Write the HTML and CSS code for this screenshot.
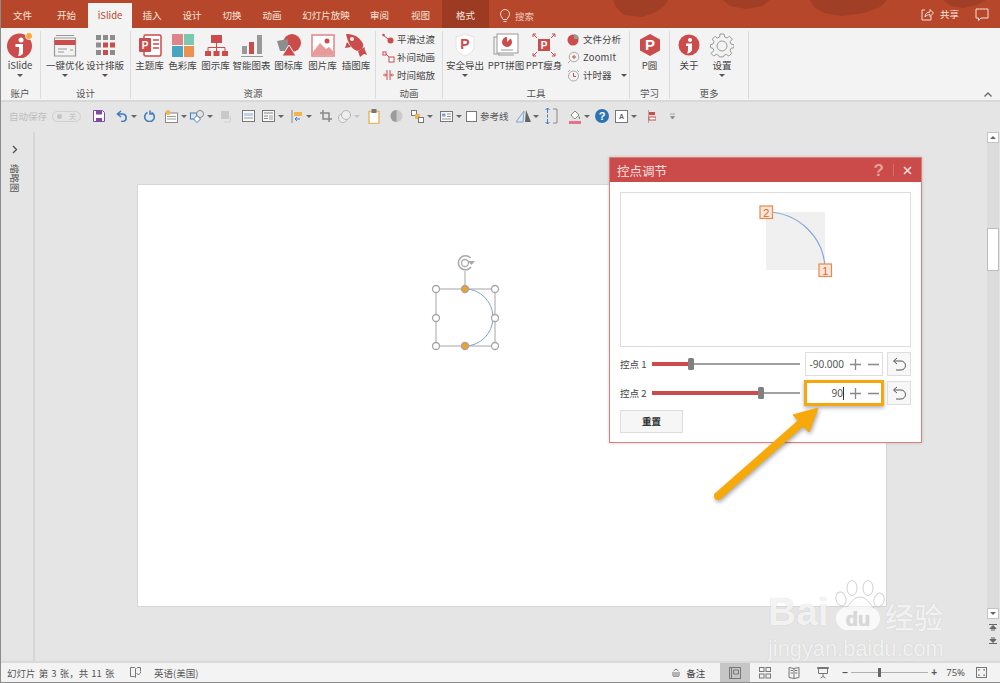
FILE: index.html
```html
<!DOCTYPE html>
<html lang="zh-CN">
<head>
<meta charset="utf-8">
<title>iSlide 控点调节</title>
<link rel="stylesheet" href="styles.css">
</head>
<body>
<div class="app">
  <header class="tabs">
    <svg class="blots" viewBox="0 0 1000 28" aria-hidden="true">
      <path d="M613 0h55l-4 6-8 6-14 5-18-2-8-8z"/>
      <path d="M723 0h47l-8 6-16 3-16-3z"/>
      <path d="M810 0h77l-7 7-16 6-22 3-18-3-10-6z"/>
      <path d="M943 0h43l-9 5-14 3-12-2z"/>
    </svg>
    <span class="tab t45">文件</span>
    <span class="tab t43">开始</span>
    <span class="tab t44 active">iSlide</span>
    <span class="tab t40">插入</span>
    <span class="tab t40">设计</span>
    <span class="tab t40">切换</span>
    <span class="tab t40">动画</span>
    <span class="tab t68">幻灯片放映</span>
    <span class="tab t39">审阅</span>
    <span class="tab t43">视图</span>
    <span class="tab t47 format">格式</span>
    <span class="search">
      <svg width="10" height="14" viewBox="0 0 10 14"><path d="M3 10.5C2.500 8.500.5 7.500.5 5a4.500 4.500 0 0 1 9 0c0 2.500-2 3.500-2.500 5.500zM3.500 12.500h3" fill="none" stroke="#f5dcd3" stroke-width="1"/></svg>
      <span>搜索</span>
    </span>
    <span class="tab-right">
      <svg width="13" height="13" viewBox="0 0 13 13"><path d="M4 2H1v10h9V8M4 9c0-3 2-5 5-5V1.500L12.500 5 9 8.500V6.500C7 6.500 5.500 7.500 4 9z" fill="none" stroke="#f6e0d8" stroke-width="1"/></svg>
      <span class="share">共享</span>
      <svg class="comment" width="14" height="13" viewBox="0 0 14 13"><path d="M1 1h12v9H6l-2.500 2.500V10H1z" fill="none" stroke="#f6e0d8" stroke-width="1"/></svg>
    </span>
  </header>

  <nav class="ribbon">
    <section class="group g40">
      <div class="items">
        <div class="btn w40">
          <svg class="ic" width="28" height="26" viewBox="0 0 28 26"><circle cx="13.5" cy="14" r="12.5" fill="#cc4b4b"/><circle cx="15" cy="8" r="2.5" fill="#fff"/><path d="M9.5 12H17v9.500c-1.500 2-3 2.500-5 2.500 1-1.500 1-3 1-9H9.500z" fill="#fff"/><circle cx="23" cy="4" r="3.5" fill="#f4a93a" stroke="#fff" stroke-width=".8"/></svg>
          <span>iSlide</span><i class="caret"></i>
        </div>
      </div>
      <div class="glabel">账户</div>
    </section>
    <section class="group g90">
      <div class="items pl3">
        <div class="btn w42">
          <svg class="ic" width="24" height="24" viewBox="0 0 24 24"><path d="M3 2.5h18M1.500 5h21v18h-21z" fill="none" stroke="#999" stroke-width="1.2"/><path d="M1.500 7h21v5h-21z" fill="#cc4b4b"/><path d="M5 16h9M5 19h6M17 17h3" stroke="#999" stroke-width="1.2"/></svg>
          <span>一键优化</span><i class="caret"></i>
        </div>
        <div class="btn w38">
          <svg class="ic" width="24" height="24" viewBox="0 0 24 24" fill="#8d8d8d"><rect x="3" y="2" width="5" height="5"/><rect x="10" y="2" width="5" height="5"/><rect x="17" y="2" width="5" height="5"/><rect x="3" y="9.500" width="5" height="5"/><rect x="10" y="9.500" width="5" height="5" fill="#cc4b4b"/><rect x="17" y="9.500" width="5" height="5" fill="#cc4b4b"/><rect x="3" y="17" width="5" height="5"/><rect x="10" y="17" width="5" height="5" fill="#cc4b4b"/><rect x="17" y="17" width="5" height="5"/></svg>
          <span>设计排版</span><i class="caret"></i>
        </div>
      </div>
      <div class="glabel">设计</div>
    </section>
    <section class="group g245">
      <div class="items pl2">
        <div class="btn w33">
          <svg class="ic" width="24" height="24" viewBox="0 0 24 24"><rect x="6" y="2" width="17" height="21" rx="1.5" fill="#fff" stroke="#cc4b4b" stroke-width="1.5"/><path d="M15 7h6M15 11h6M15 15h6" stroke="#cc4b4b" stroke-width="1.5"/><rect x="1" y="5" width="12" height="14" rx="1" fill="#cc4b4b"/><text x="7" y="16" class="svgp small">P</text></svg>
          <span>主题库</span>
        </div>
        <div class="btn w33">
          <svg class="ic" width="24" height="24" viewBox="0 0 24 24"><rect x="1" y="1" width="11" height="11" fill="#e0848c"/><rect x="13" y="1" width="10" height="11" fill="#7cc8ae"/><rect x="1" y="13" width="11" height="11" fill="#47a5c2"/><rect x="13" y="13" width="10" height="11" fill="#ec9150"/></svg>
          <span>色彩库</span>
        </div>
        <div class="btn w33">
          <svg class="ic" width="24" height="24" viewBox="0 0 24 24"><rect x="7" y="2" width="11" height="8" fill="#cc4b4b"/><path d="M12.5 10v4M4 18v-3.500h17V18M12.500 14v4" fill="none" stroke="#cc4b4b"/><rect x="1" y="18" width="6" height="5" fill="#cc4b4b"/><rect x="9.500" y="18" width="6" height="5" fill="#cc4b4b"/><rect x="18" y="18" width="6" height="5" fill="#cc4b4b"/></svg>
          <span>图示库</span>
        </div>
        <div class="btn w39">
          <svg class="ic" width="24" height="24" viewBox="0 0 24 24"><rect x="2" y="13" width="5" height="8" fill="#999"/><rect x="9" y="9" width="5" height="12" fill="#cc4b4b"/><rect x="17" y="2" width="5" height="19" fill="#999"/><path d="M1 23.500h22" stroke="#999"/></svg>
          <span>智能图表</span>
        </div>
        <div class="btn w35">
          <svg class="ic" width="26" height="24" viewBox="0 0 26 24"><circle cx="16" cy="10" r="9" fill="#cc4b4b"/><path d="M1 8l11-2v12H4z" fill="#8d8d8d"/><path d="M13 12l7 11H6z" fill="#cc4b4b" stroke="#f3f3f3"/></svg>
          <span>图标库</span>
        </div>
        <div class="btn w33">
          <svg class="ic" width="24" height="24" viewBox="0 0 24 24"><rect x="1" y="2" width="22" height="21" fill="#fff" stroke="#e0848c" stroke-width="1.5"/><circle cx="16" cy="8" r="2.5" fill="#cc4b4b"/><path d="M2 19l7-9 6 6 3-2 4 4v4H2z" fill="#e79a9a"/></svg>
          <span>图片库</span>
        </div>
        <div class="btn w34">
          <svg class="ic" width="24" height="24" viewBox="0 0 24 24"><path d="M2 1c7 0 12 2 16 8 2 3 1 5 0 7l-5 2C8 16 4 11 2 1z" fill="#cc4b4b"/><circle cx="8" cy="6" r="2" fill="#f3f3f3"/><path d="M14 18l2 6 4-3 1-7zM3 9l-2 6 6-1zM18 20l5 2-2-5z" fill="#cc4b4b"/></svg>
          <span>插图库</span>
        </div>
      </div>
      <div class="glabel">资源</div>
    </section>
    <section class="group g67">
      <div class="col pl6">
        <div class="row"><svg width="13" height="12" viewBox="0 0 13 12"><path d="M1 2l5 4" stroke="#cc4b4b"/><circle cx="1.5" cy="2" r="1.3" fill="#cc4b4b"/><circle cx="8.5" cy="7.500" r="3" fill="#cc4b4b"/></svg><span>平滑过渡</span></div>
        <div class="row"><svg width="13" height="12" viewBox="0 0 13 12" fill="#fff" stroke="#cc4b4b"><rect x="1" y="1" width="3" height="3"/><path d="M4 3l3 3"/><rect x="7" y="6" width="5" height="5"/></svg><span>补间动画</span></div>
        <div class="row"><svg width="13" height="12" viewBox="0 0 13 12" fill="none" stroke="#cc4b4b"><path d="M1 6h3M9 6h3M5 1v10M8 1v10M3 4.500L4.500 6 3 7.500M10 4.500L8.500 6 10 7.500"/></svg><span>时间缩放</span></div>
      </div>
      <div class="glabel">动画</div>
    </section>
    <section class="group g188">
      <div class="items">
        <div class="btn w44">
          <svg class="ic" width="22" height="24" viewBox="0 0 22 24"><path d="M11 1l9 3v9c0 5-4 8-9 10-5-2-9-5-9-10V4z" fill="#fff" stroke="#e2e2e2"/><text x="11" y="16" class="svgp red">P</text></svg>
          <span>安全导出</span><i class="caret"></i>
        </div>
        <div class="btn w38">
          <svg class="ic" width="26" height="24" viewBox="0 0 26 24"><rect x="1" y="4" width="5" height="17" fill="none" stroke="#999"/><rect x="4" y="1" width="21" height="19" fill="#fff" stroke="#999"/><circle cx="14" cy="9" r="5" fill="#cc4b4b"/><path d="M14 9V4h5z" fill="#fff"/><path d="M8 17h12M5 22h16" stroke="#999"/></svg>
          <span>PPT拼图</span>
        </div>
        <div class="btn w38">
          <svg class="ic" width="24" height="24" viewBox="0 0 24 24"><rect x="6" y="6" width="12" height="12" fill="#cc4b4b"/><text x="12" y="15.500" class="svgp small">P</text><path d="M1 1l4 4M23 1l-4 4M1 23l4-4M23 23l-4-4M1 4V1h3M20 1h3v3M1 20v3h3M20 23h3v-3" stroke="#cc4b4b" fill="none"/></svg>
          <span>PPT瘦身</span>
        </div>
        <div class="col tools">
          <div class="row"><svg width="13" height="13" viewBox="0 0 13 13"><circle cx="6" cy="7" r="5.500" fill="#cc4b4b"/><path d="M7 1a5.500 5.500 0 0 1 5 5H7z" fill="#999"/></svg><span>文件分析</span></div>
          <div class="row"><svg width="13" height="13" viewBox="0 0 13 13" fill="none" stroke="#aaa"><circle cx="7" cy="6" r="4.800"/><path d="M3.500 9.500L1 12"/><path d="M5 6h4M7 4v4" stroke="#cc4b4b"/></svg><span class="zoomit">ZoomIt</span></div>
          <div class="row"><svg width="13" height="13" viewBox="0 0 13 13" fill="none" stroke="#aaa"><circle cx="6.5" cy="7" r="5"/><path d="M6.500 4v3.500H9" stroke="#cc4b4b"/><path d="M1 3l2-2M12 3l-2-2"/></svg><span>计时器</span><i class="caret inline"></i></div>
        </div>
      </div>
      <div class="glabel">工具</div>
    </section>
    <section class="group g40 wide">
      <div class="items">
        <div class="btn full">
          <svg class="ic" width="24" height="24" viewBox="0 0 24 24"><path d="M12 1l10 5.500v11L12 23 2 17.500v-11z" fill="#cc4b4b"/><text x="12" y="17" class="svgp big">P</text></svg>
          <span>P圆</span>
        </div>
      </div>
      <div class="glabel">学习</div>
    </section>
    <section class="group g79">
      <div class="items">
        <div class="btn w38">
          <svg class="ic" width="24" height="24" viewBox="0 0 24 24"><circle cx="12" cy="12" r="10.500" fill="#cc4b4b"/><circle cx="13" cy="7" r="2" fill="#fff"/><path d="M9 10.500h6v7c-1.500 2-3 3-5 3 1-1.500 1-3 1-7.500H9z" fill="#fff"/></svg>
          <span>关于</span>
        </div>
        <div class="btn w28">
          <svg class="ic" width="24" height="24" viewBox="0 0 24 24" fill="none" stroke="#9a9a9a"><path d="M10 1h4l.6 3 2.400 1 2.600-1.700 2.800 2.800L20 8.700l1 2.400 3 .6v3l-3 .6-1 2.400 1.700 2.600-2.800 2.800-2.600-1.700-2.400 1-.6 1.500h-4l-.6-1.500-2.400-1-2.600 1.700-2.800-2.800L4 17.700l-1-2.400-2.500-.6v-3l2.500-.6 1-2.400-1.700-2.600 2.800-2.800L7.200 5l2.400-1z"/><circle cx="12" cy="13" r="5"/></svg>
          <span>设置</span><i class="caret"></i>
        </div>
      </div>
      <div class="glabel">更多</div>
    </section>
    <svg class="collapse" width="8" height="5" viewBox="0 0 8 5"><path d="M.5 4.500L4 1l3.500 3.500" fill="none" stroke="#666" stroke-width="1.3"/></svg>
  </nav>

  <div class="qat">
    <span class="autosave">自动保存</span>
    <span class="toggle"><i></i><b>关</b></span>
    <svg class="m12" width="12" height="12" viewBox="0 0 12 12"><path d="M.5.500h9l2 2v9H.500z" fill="#fff" stroke="#7d4aa6"/><path d="M3 .5h6v4H3zM3 8h6v3.500H3z" fill="#7d4aa6"/></svg>
    <svg class="m11" width="12" height="12" viewBox="0 0 12 12" fill="none" stroke="#3f7fbf" stroke-width="1.6"><path d="M5 1L1.500 4 5 7M2 4h5a3.800 3.800 0 0 1 0 7.500H5"/></svg>
    <i class="dn"></i>
    <svg class="m6" width="12" height="12" viewBox="0 0 12 12" fill="none" stroke="#3f7fbf" stroke-width="1.6"><path d="M4.500 2.500a4.800 4.800 0 1 0 4 0M7 .5v3.500h3.500"/></svg>
    <svg class="m10" width="13" height="13" viewBox="0 0 13 13"><rect x=".5" y="3" width="12" height="9.500" fill="#fff" stroke="#888"/><path d="M2 6.500h9M2 9h9" stroke="#999"/><circle cx="3" cy="2.500" r="2.500" fill="#f0b64d"/></svg>
    <i class="dn"></i>
    <svg class="m3" width="14" height="13" viewBox="0 0 14 13" fill="none" stroke="#3f7fbf"><rect x=".5" y="3" width="6" height="6"/><circle cx="10" cy="4" r="3.500" stroke="#888"/><path d="M7 5.500l3.500 3.500L7 12.500 3.500 9z" fill="#fff"/></svg>
    <i class="dn"></i>
    <svg class="m7" width="13" height="13" viewBox="0 0 13 13"><rect x="1" y="1" width="8" height="8" fill="#c9c9c9"/><path d="M10.500 6v6H4" fill="none" stroke="#d2d2d2"/></svg>
    <svg class="m9" width="13" height="12" viewBox="0 0 13 12"><rect x=".5" y=".5" width="12" height="11" fill="#f8f8f8" stroke="#777"/><rect x="2" y="3" width="9" height="3" fill="#b8d4ef"/><path d="M2 8h9" stroke="#999"/></svg>
    <svg class="m7" width="13" height="12" viewBox="0 0 13 12"><rect x=".5" y=".5" width="12" height="11" fill="#f8f8f8" stroke="#777"/><path d="M2 3h9M2 6h4M2 8.500h4" stroke="#888"/><rect x="7" y="5" width="4" height="5" fill="#ccc"/></svg>
    <i class="dn"></i>
    <svg class="m7" width="12" height="13" viewBox="0 0 12 13"><path d="M1 0v13" stroke="#888"/><rect x="3" y="2" width="8" height="4" fill="#f0b64d"/><path d="M9 9H4M6 7L4 9l2 2" fill="none" stroke="#3f7fbf"/></svg>
    <i class="dn"></i>
    <svg class="m8" width="12" height="12" viewBox="0 0 12 12" fill="none" stroke="#888" stroke-width="1.5"><path d="M3 0v9h9M0 3h9v9"/></svg>
    <svg class="m6" width="13" height="13" viewBox="0 0 13 13" fill="#eee" stroke="#b5b5b5"><circle cx="5" cy="8" r="4.500"/><circle cx="8" cy="5" r="4.500"/></svg>
    <i class="dn pale"></i>
    <svg class="m8" width="12" height="15" viewBox="0 0 12 15"><rect x="1" y="2.500" width="10" height="12" fill="#fff" stroke="#eab56a" stroke-width="1.5"/><rect x="3.500" y="0" width="5" height="4" fill="#777"/></svg>
    <svg class="m10" width="13" height="14" viewBox="0 0 13 14"><circle cx="6.5" cy="7" r="6" fill="#c9c9c9"/><path d="M6.500 1a6 6 0 0 0 0 12z" fill="#9b9b9b"/></svg>
    <svg class="m8" width="13" height="13" viewBox="0 0 13 13"><rect x=".5" y=".5" width="5" height="5" fill="#fff" stroke="#777"/><rect x="4" y="4" width="5" height="5" fill="#f0b64d"/><rect x="7.500" y="7.500" width="5" height="5" fill="#fff" stroke="#777"/></svg>
    <i class="dn"></i>
    <svg class="m7" width="13" height="11" viewBox="0 0 13 11"><rect x=".5" y=".5" width="12" height="10" fill="#f8f8f8" stroke="#777"/><rect x="2" y="2.500" width="3.500" height="3" fill="#79a6d6"/><path d="M7 3h4M7 5.500h4M2 8h9" stroke="#999"/></svg>
    <i class="dn"></i>
    <span class="check"></span>
    <span class="guide">参考线</span>
    <svg class="m6" width="18" height="13" viewBox="0 0 18 13"><path d="M11 0l5 12h-6z" fill="#666"/><path d="M9 1L1 12h7z" fill="#dfe8f2" stroke="#7da4cb"/></svg>
    <i class="dn m1x"></i>
    <svg class="m6" width="13" height="16" viewBox="0 0 13 16" fill="none" stroke="#3f7fbf"><path d="M2.500 0v5M.5 2l2-2 2 2M2.500 16v-5M.5 14l2 2 2-2M2.500 6.500v3"/><path d="M8 1h4v14H8" stroke="#888"/></svg>
    <svg class="m11" width="12" height="15" viewBox="0 0 12 15"><path d="M2 6l4-4 4 4-3.500 3.500H5z" fill="#fff" stroke="#888"/><path d="M10 7c1.500 1.500 1.500 3 .5 3s-1-1.500-.5-3z" fill="#888"/><rect x="0" y="12" width="12" height="3" fill="#e8718c"/></svg>
    <i class="dn"></i>
    <svg class="m5" width="14" height="14" viewBox="0 0 14 14"><circle cx="7" cy="7" r="7" fill="#2c73b4"/><text x="7" y="11" class="svgq">?</text></svg>
    <span class="abox">A</span>
    <i class="dn"></i>
    <svg class="m11" width="8" height="13" viewBox="0 0 8 13"><path d="M.5 0v13" stroke="#aaa"/><rect x="1" y="2" width="6" height="3" fill="#cc4b4b"/><rect x="1" y="7" width="7" height="3" fill="#fff" stroke="#cc4b4b"/></svg>
    <svg class="m14" width="5" height="7" viewBox="0 0 5 7"><path d="M0 1h5M.5 3.500L2.500 6l2-2.500z" fill="#888" stroke="#888" stroke-width=".7"/></svg>
  </div>

  <main class="work">
    <aside class="thumbs">
      <svg width="6" height="9" viewBox="0 0 6 9"><path d="M1 1l3.500 3.500L1 8" fill="none" stroke="#555" stroke-width="1.4"/></svg>
      <span class="vtext">缩略图</span>
    </aside>
    <div class="canvas">
      <div class="slide"></div>
    </div>
    <div class="vscroll">
      <span class="sbtn"><i class="up"></i></span>
      <span class="before"></span>
      <span class="thumb-v"></span>
      <span class="grow"></span>
      <span class="sbtn"><i class="down"></i></span>
      <span class="pg">
        <svg width="8" height="7" viewBox="0 0 8 7"><path d="M0 .5h8M4 1.500L1 4.500h6zM2 6h4" fill="#666" stroke="#666"/></svg>
        <svg width="8" height="7" viewBox="0 0 8 7"><path d="M0 6.500h8M4 5.500L1 2.500h6zM2 1h4" fill="#666" stroke="#666"/></svg>
      </span>
    </div>
  </main>

  <footer class="status">
    <span class="st-text">幻灯片 第 3 张，共 11 张</span>
    <svg class="st-book" width="11" height="11" viewBox="0 0 11 11" fill="none" stroke="#777"><path d="M.5.500h4l1 1v9l-1-1h-4zM6.500 1.500l1-1h3v4M6.500 6l2 2 2.500-3"/></svg>
    <span class="st-lang">英语(美国)</span>
    <span class="st-right">
      <svg width="8" height="9" viewBox="0 0 8 9" fill="none" stroke="#777"><path d="M1.500 3L4 1l2.500 2M0 5h8M0 7h8M1 8.800h6"/></svg>
      <span class="notes">备注</span>
      <span class="view on"><svg width="12" height="12" viewBox="0 0 12 12" fill="none" stroke="#777"><rect x=".5" y=".5" width="11" height="11"/><path d="M2.500.5v11M4.500 3h5v4h-5z"/></svg></span>
      <span class="view"><svg width="12" height="12" viewBox="0 0 12 12" fill="none" stroke="#777"><rect x=".5" y=".5" width="4.500" height="4"/><rect x="7" y=".5" width="4.500" height="4"/><rect x=".5" y="7" width="4.500" height="4"/><rect x="7" y="7" width="4.500" height="4"/></svg></span>
      <span class="view"><svg width="12" height="12" viewBox="0 0 12 12" fill="none" stroke="#777"><path d="M6 1.500L1 .5v10l5 1 5-1V.5zM6 1.500v10M2.500 3.500H5M2.500 6H5M7 3.500h2.500M7 6h2.500"/></svg></span>
      <span class="view"><svg width="12" height="12" viewBox="0 0 12 12" fill="none" stroke="#777"><path d="M.5.500h11v1H.500zM1.500 1.500v5h9v-5M6 6.500v3M3.500 11L6 9.500 8.500 11"/></svg></span>
      <span class="zoom">
        <b class="zm">−</b>
        <span class="ztrack"><i class="zthumb"></i></span>
        <b class="zp">+</b>
      </span>
      <span class="pct">75%</span>
      <svg class="fit" width="11" height="11" viewBox="0 0 11 11" fill="none" stroke="#777"><rect x=".5" y=".5" width="10" height="10"/><path d="M3 2v1H2M8 2v1h1M3 9V8H2M8 9V8h1" stroke-width="1.2"/></svg>
    </span>
  </footer>

  <svg class="selection" viewBox="0 0 70 100" aria-hidden="true">
    <path d="M35 37V19M6 37h59v57H6z" fill="none" stroke="#a5a5a5"/>
    <path d="M35 37a28 28.500 0 0 1 0 57" fill="none" stroke="#7fa6cc"/>
    <path d="M40.500 6A7 7 0 1 0 41 15" fill="none" stroke="#a9a9a9" stroke-width="1.6"/>
    <circle cx="35" cy="11" r="3.5" fill="none" stroke="#a9a9a9" stroke-width="1.3"/>
    <path d="M37.500 9h7.500l-3.500 4z" fill="#a9a9a9"/>
    <g fill="#fff" stroke="#a5a5a5" stroke-width="1.3">
      <circle cx="6" cy="37" r="3.5"/><circle cx="65" cy="37" r="3.5"/>
      <circle cx="6" cy="66" r="3.5"/><circle cx="65" cy="66" r="3.5"/>
      <circle cx="6" cy="94" r="3.5"/><circle cx="65" cy="94" r="3.5"/>
      <circle cx="35" cy="37" r="3.5" fill="#f1a226"/><circle cx="35" cy="94" r="3.5" fill="#f1a226"/>
    </g>
  </svg>

  <section class="dialog">
    <div class="dlg-head">
      <span class="dlg-title">控点调节</span>
      <span class="dlg-q">?</span>
      <span class="dlg-sep"></span>
      <svg width="9" height="9" viewBox="0 0 9 9"><path d="M1 1l7 7M8 1L1 8" stroke="#f8e0e0" stroke-width="1.6"/></svg>
    </div>
    <div class="dlg-body">
      <div class="preview">
        <svg width="288" height="153" viewBox="0 0 288 153">
          <rect x="145" y="19" width="59" height="58" fill="#f0f0f0"/>
          <path d="M145 19a59 58 0 0 1 59 58" fill="none" stroke="#86a8db" stroke-width="1.2"/>
          <rect x="139" y="13" width="12.5" height="12.5" fill="#fbe5d8" stroke="#e58a50" stroke-width="1.2"/>
          <text x="145.2" y="23.500" class="pt">2</text>
          <rect x="198" y="71" width="12.5" height="12.5" fill="#fbe5d8" stroke="#e58a50" stroke-width="1.2"/>
          <text x="204.2" y="81.500" class="pt">1</text>
        </svg>
      </div>
      <div class="ctl">
        <span class="ctl-label">控点 1</span>
        <div class="slider"><i class="fill" style="width:36px"></i><i class="knob"></i><i class="rest"></i></div>
        <div class="num"><span class="val">-90.000</span><svg class="pm" width="30" height="11" viewBox="0 0 30 11"><path d="M1 5.500h11M6.500 0v11M19 5.500h11" stroke="#888" stroke-width="1.3"/></svg></div>
        <span class="undo"><svg width="14" height="14" viewBox="0 0 14 14" fill="none" stroke="#555"><path d="M5 1L1.500 4 5 7M2 4h7a4 4 0 0 1 0 9H4"/></svg></span>
      </div>
      <div class="ctl">
        <span class="ctl-label">控点 2</span>
        <div class="slider"><i class="fill" style="width:106px"></i><i class="knob"></i><i class="rest"></i></div>
        <div class="num hot"><span class="val">90<u></u></span><svg class="pm" width="30" height="11" viewBox="0 0 30 11"><path d="M1 5.500h11M6.500 0v11M19 5.500h11" stroke="#888" stroke-width="1.3"/></svg></div>
        <span class="undo"><svg width="14" height="14" viewBox="0 0 14 14" fill="none" stroke="#555"><path d="M5 1L1.500 4 5 7M2 4h7a4 4 0 0 1 0 9H4"/></svg></span>
      </div>
      <button class="reset" type="button">重置</button>
    </div>
  </section>

  <svg class="arrow" viewBox="0 0 130 110" aria-hidden="true">
    <path d="M8 95L91 22" stroke="#f6a908" stroke-width="8" stroke-linecap="round"/>
    <path d="M108 7L83 14l16 17z" fill="#f6a908" stroke="#f6a908" stroke-linejoin="round"/>
  </svg>

  <div class="mark">
    <div class="mark-top">
      <span class="bai">Bai</span>
      <svg class="paw" width="54" height="54" viewBox="0 0 54 54">
        <g fill="rgba(255,255,255,.55)" stroke="rgba(190,190,190,.7)" stroke-width="1">
          <ellipse cx="9" cy="19" rx="5" ry="7" transform="rotate(-15 9 19)"/>
          <ellipse cx="20" cy="8" rx="5" ry="7.5"/>
          <ellipse cx="36" cy="8" rx="5" ry="7.5"/>
          <ellipse cx="47" cy="20" rx="5" ry="7" transform="rotate(15 47 20)"/>
          <path d="M28 17c6 0 9 6 14 11H14c5-5 8-11 14-11z"/>
        </g>
        <rect x="4" y="27" width="44" height="23" rx="11.5" fill="rgba(255,255,255,.75)"/>
        <text x="26" y="46" class="du">du</text>
      </svg>
      <span class="jy">经验</span>
    </div>
    <div class="domain">jingyan.baidu.com</div>
  </div>
</div>
</body>
</html>
```

FILE: styles.css
```css
* { box-sizing: border-box; }
html, body { margin: 0; padding: 0; }
body {
  font-family: "Noto Sans CJK SC", "Noto Sans", sans-serif;
  font-size: 9.5px;
  color: #444;
}
i, u { display: block; font-style: normal; text-decoration: none; }

.app {
  position: relative;
  width: 1000px;
  height: 683px;
  overflow: hidden;
  display: flex;
  flex-direction: column;
  background: #e5e5e5;
  border-left: 1px solid #8c8c8c;
  border-bottom: 1px solid #8c8c8c;
}

/* Title tabs */
.tabs {
  position: relative;
  flex: 0 0 28px;
  margin-left: -1px;
  display: flex;
  align-items: stretch;
  background: #b7472a;
  color: #f8e6df;
}
.blots { position: absolute; inset: 0; width: 1000px; height: 28px; fill: #a03f25; }
.tab { position: relative; display: flex; align-items: center; justify-content: center; line-height: 1; padding-top: 3px; }
.t39 { width: 39px; } .t40 { width: 40px; } .t43 { width: 43px; } .t44 { width: 44px; }
.t45 { width: 45px; } .t47 { width: 47px; } .t68 { width: 68px; }
.tab.active { margin-top: 3px; padding-top: 0; background: #f3f3f3; color: #b7472a; }
.tab.format { background: #9c3b22; }
.search { position: relative; display: flex; align-items: center; gap: 5px; margin-left: 11px; padding-top: 3px; color: #eec9bc; }
.tab-right { position: relative; margin-left: auto; display: flex; align-items: center; padding-right: 11px; }
.share { margin-left: 6px; }
.comment { margin-left: 16px; }

/* Ribbon */
.ribbon {
  position: relative;
  flex: 0 0 74px;
  min-height: 0;
  margin-left: -1px;
  display: flex;
  padding: 3px 0 1px;
  background: #f3f3f3;
  border-bottom: 2px solid #d8d8d8;
}
.group { display: flex; flex-direction: column; min-height: 0; border-right: 1px solid #dcdcdc; }
.g40 { width: 41px; } .g90 { width: 90px; } .g245 { width: 245px; } .g67 { width: 67px; }
.g188 { width: 187px; } .g79 { width: 79px; }
.g40.wide { width: 40px; }
.items { flex: 1; min-height: 0; display: flex; }
.pl2 { padding-left: 2px; } .pl3 { padding-left: 3px; }
.glabel { flex: 0 0 12px; line-height: 12px; text-align: center; color: #555; }
.btn { display: flex; flex-direction: column; align-items: center; padding-top: 1px; line-height: 14px; white-space: nowrap; }
.ic { flex: 0 0 26px; height: 26px; }
.w28 { width: 28px; } .w33 { width: 33px; } .w34 { width: 34px; } .w35 { width: 35px; }
.w38 { width: 38px; } .w39 { width: 39px; } .w40 { width: 40px; } .w42 { width: 42px; } .w44 { width: 44px; }
.full { width: 100%; }
.caret { width: 0; height: 0; margin-top: 2px; border: 3px solid transparent; border-top: 3px solid #555; border-bottom: 0; }
.caret.inline { margin: 0 0 0 6px; }
.col { flex: 1; display: flex; flex-direction: column; margin-top: -1px; }
.pl6 { padding-left: 6px; }
.tools { flex: none; width: 62px; margin-left: 4px; }
.row { flex: 0 0 18px; display: flex; align-items: center; gap: 2px; white-space: nowrap; }
.tools .row { gap: 3px; }
.zoomit { letter-spacing: .2px; }
.collapse { position: absolute; right: 8px; bottom: 3px; }

/* Quick access */
.qat {
  flex: 0 0 28px;
  margin-left: -1px;
  padding-left: 9px;
  display: flex;
  align-items: center;
}
.qat > svg { flex: none; }
.autosave { width: 37px; color: #bdbdbd; white-space: nowrap; }
.toggle { width: 29px; height: 11px; margin-left: 6px; padding: 0 4px; display: flex; align-items: center; justify-content: space-between; border: 1px solid #d0d0d0; border-radius: 6px; }
.toggle i { width: 5px; height: 5px; border-radius: 50%; background: #c4c4c4; }
.toggle b { font-weight: 400; font-size: 7px; color: #c0c0c0; }
.dn { flex: none; width: 6px; height: 3px; margin-left: 3px; border: 3px solid transparent; border-top: 3px solid #666; border-bottom: 0; }
.dn.pale { border-top-color: #c4c4c4; }
.dn.m1x { margin-left: 0; }
.m3 { margin-left: 3px; } .m5 { margin-left: 5px; } .m6 { margin-left: 6px; } .m7 { margin-left: 7px; }
.m8 { margin-left: 8px; } .m9 { margin-left: 9px; } .m10 { margin-left: 10px; } .m11 { margin-left: 11px; }
.m12 { margin-left: 12px; } .m14 { margin-left: 14px; }
.check { flex: none; width: 11px; height: 11px; margin-left: 4px; background: #fff; border: 1px solid #777; }
.guide { flex: none; margin-left: 3px; width: 29px; white-space: nowrap; color: #555; }
.abox { flex: none; width: 13px; height: 13px; margin-left: 6px; border: 1px solid #777; background: #fff; font: 700 7px/11px "Liberation Sans", sans-serif; text-align: center; color: #666; }

/* Workspace */
.work { flex: 1; min-height: 0; display: flex; border-bottom: 2px solid #dadada; }
.thumbs {
  flex: 0 0 34px;
  margin-top: 2px;
  padding: 13px 4px 0 0;
  display: flex;
  flex-direction: column;
  align-items: center;
  gap: 10px;
  border-right: 2px solid #d6d6d6;
}
.vtext { writing-mode: vertical-rl; text-orientation: sideways; line-height: 10px; color: #555; }
.canvas { flex: 1; padding: 54px 0 0 102px; }
.slide { width: 750px; height: 423px; background: #fff; border: 1px solid #d6d6d6; }
.vscroll { flex: 0 0 12px; margin-top: 2px; margin-right: 1px; display: flex; flex-direction: column; background: #dcdcdc; }
.sbtn { flex: 0 0 11px; display: flex; align-items: center; justify-content: center; background: #fff; border: 1px solid #c4c4c4; }
.up, .down { width: 0; height: 0; border: 3px solid transparent; }
.up { border-bottom: 3px solid #666; border-top: 0; }
.down { border-top: 3px solid #666; border-bottom: 0; }
.before { flex: 0 0 85px; }
.thumb-v { flex: 0 0 43px; background: #fff; border: 1px solid #bdbdbd; }
.grow { flex: 1; }
.pg { flex: 0 0 42px; padding-top: 5px; display: flex; flex-direction: column; align-items: center; gap: 6px; background: #e5e5e5; }

/* Status */
.status {
  flex: 0 0 19px;
  display: flex;
  align-items: center;
  padding-left: 6px;
  background: #f3f3f3;
  color: #555;
}
.st-text { width: 123px; white-space: nowrap; word-spacing: 1px; }
.st-book { margin-right: 13px; flex: none; }
.st-lang { white-space: nowrap; }
.st-right { margin-left: auto; height: 100%; display: flex; align-items: center; }
.notes { margin: 0 15px 0 6px; color: #444; }
.view { width: 29px; height: 100%; display: flex; align-items: center; justify-content: center; }
.view.on { width: 30px; background: #c6c6c6; }
.zoom { display: flex; align-items: center; margin-left: 5px; }
.zm, .zp { width: 6px; font: 700 10px/10px "Liberation Sans", sans-serif; text-align: center; color: #555; }
.ztrack { position: relative; display: block; width: 77px; height: 1px; margin: 0 3px; background: #b0b0b0; }
.zthumb { position: absolute; left: 27px; top: -4px; width: 3px; height: 9px; background: #666; }
.pct { margin-left: 9px; font-family: "Noto Sans", sans-serif; }
.fit { margin: 0 13px 0 11px; flex: none; }

/* Selected shape on the slide */
.selection { position: absolute; left: 429px; top: 252px; width: 70px; height: 100px; }

/* Dialog window */
.dialog {
  position: absolute;
  left: 608px;
  top: 157px;
  width: 313px;
  height: 286px;
  background: #fff;
  border: 1px solid #e27b7b;
  box-shadow: 0 0 3px rgba(0,0,0,.18);
}
.dlg-head { height: 24px; padding: 0 9px 0 7px; display: flex; align-items: center; background: #cb4a4a; color: #f8e0e0; }
.dlg-title { flex: 1; font-size: 12.5px; }
.dlg-q { font: 700 17px/1 "Liberation Sans", sans-serif; color: #eb9d9d; }
.dlg-sep { width: 1px; height: 12px; margin: 0 9px; background: #d96b6b; }
.dlg-body { padding: 10px 10px 0; }
.preview { width: 291px; height: 155px; margin-bottom: 5px; border: 1px solid #dcdcdc; }
.preview svg { display: block; }
.ctl { height: 24px; margin-bottom: 5px; display: flex; align-items: center; }
.ctl-label { width: 32px; white-space: nowrap; }
.slider { width: 148px; display: flex; align-items: center; }
.fill { height: 4px; background: #cc4b4b; }
.knob { width: 6px; height: 12px; border-radius: 1.5px; background: #808080; }
.rest { flex: 1; height: 2px; background: #a0a0a0; }
.num { width: 78px; height: 24px; margin-left: 5px; padding-right: 2px; display: flex; align-items: center; justify-content: flex-end; gap: 5px; background: #fff; border: 1px solid #dedede; font-size: 10px; }
.val { display: flex; align-items: center; font-family: "Noto Sans", sans-serif; color: #555; }
.val u { width: 1px; height: 13px; background: #333; }
.hot { outline: 3px solid #f4a70f; outline-offset: -2px; box-shadow: 0 2px 4px 1px rgba(0,0,0,.3); }
.pm { flex: none; margin-right: 1px; }
.undo { width: 24px; height: 24px; margin-left: 4px; display: flex; align-items: center; justify-content: center; background: #f7f7f7; border: 1px solid #dedede; }
.reset { display: block; width: 63px; height: 23px; padding: 0; background: #f6f6f6; border: 1px solid #dcdcdc; font: 700 9.5px/1 "Noto Sans CJK SC", sans-serif; color: #333; }

/* Callout arrow */
.arrow { position: absolute; left: 709px; top: 401px; width: 130px; height: 110px; overflow: visible; filter: drop-shadow(1px 2px 2px rgba(0,0,0,.35)); }

/* Watermark */
.mark { position: absolute; left: 767px; top: 580px; width: 180px; color: rgba(255,255,255,.78); font-family: "Liberation Sans", sans-serif; text-shadow: 0 0 1px rgba(170,170,170,.6); }
.mark-top { display: flex; align-items: flex-end; height: 54px; }
.bai { width: 60px; font-size: 39px; line-height: 44px; font-weight: 700; }
.paw { flex: none; margin-left: 4px; margin-right: -1px; }
.jy { font: 500 29px/36px "Noto Sans CJK SC", sans-serif; }
.domain { font-size: 21.8px; line-height: 24px; margin-top: 3px; white-space: nowrap; }

/* SVG text */
.svgp { font: 700 14px "Liberation Sans", sans-serif; text-anchor: middle; fill: #fff; }
.svgp.red { fill: #cc4b4b; }
.svgp.small { font-size: 10px; }
.svgp.big { font-size: 15px; }
.svgq { font: 700 11px "Liberation Sans", sans-serif; text-anchor: middle; fill: #fff; }
.pt { font: 400 11px "Liberation Sans", sans-serif; text-anchor: middle; fill: #d86a30; }
.du { font: 700 20px "Liberation Sans", sans-serif; text-anchor: middle; fill: #d8d8d8; }
```
